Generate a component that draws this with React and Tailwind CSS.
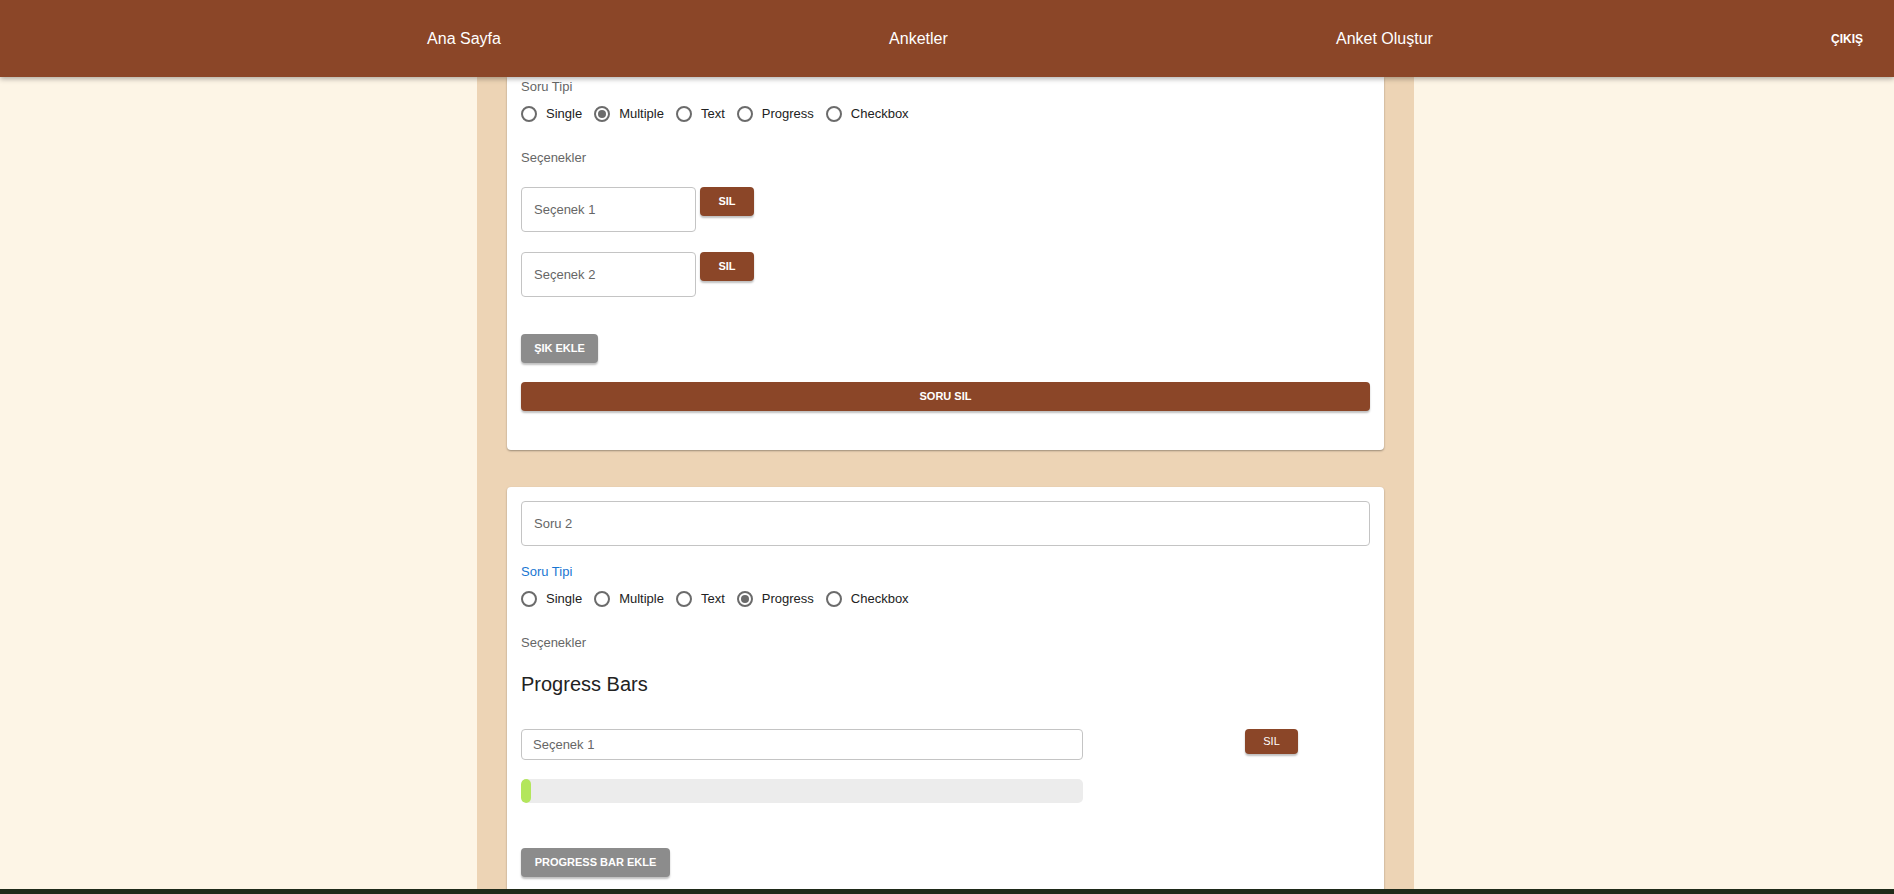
import React from 'react';

const types = ['Single', 'Multiple', 'Text', 'Progress', 'Checkbox'];

const Radio = ({ checked, label }) => (
  <label className="flex items-center mr-[12px]">
    <span className="w-[16px] h-[16px] rounded-full border-2 border-[#6b6b6b] flex items-center justify-center">
      {checked && <span className="w-[8px] h-[8px] rounded-full bg-[#6b6b6b]" />}
    </span>
    <span className="ml-[9px] text-[13px] text-[#222]">{label}</span>
  </label>
);

const TypeGroup = ({ selected, active }) => (
  <div>
    <div className={`text-[13px] leading-[16px] ${active ? 'text-[#1976d2]' : 'text-[#666]'}`}>Soru Tipi</div>
    <div className="flex items-center h-[20px] mt-[9px]">
      {types.map((t) => (
        <Radio key={t} label={t} checked={t === selected} />
      ))}
    </div>
    <div className="text-[13px] leading-[16px] text-[#666] mt-[26px]">Seçenekler</div>
  </div>
);

const BrownBtn = ({ children, className = '' }) => (
  <button className={`bg-[#8b4628] text-white text-[11px] font-bold rounded-[4px] shadow-[0_2px_2px_rgba(0,0,0,0.25)] ${className}`}>
    {children}
  </button>
);

const GrayBtn = ({ children, className = '' }) => (
  <button className={`bg-[#8c8c8c] text-white text-[11px] font-bold rounded-[4px] shadow-[0_2px_2px_rgba(0,0,0,0.25)] ${className}`}>
    {children}
  </button>
);

const OptionRow = ({ text }) => (
  <div className="flex items-start">
    <div className="w-[175px] h-[45px] border border-[#c4c4c4] rounded-[4px] px-[12px] flex items-center text-[13px] text-[#666]">
      {text}
    </div>
    <BrownBtn className="ml-[4px] w-[54px] h-[29px]">SIL</BrownBtn>
  </div>
);

export default function App() {
  return (
    <div className="min-h-[894px] h-[894px] overflow-hidden bg-[#fdf5e6] flex flex-col" style={{ fontFamily: '"Liberation Sans", Arial, sans-serif' }}>
      <header className="h-[77px] shrink-0 bg-[#8b4628] flex items-center shadow-[0_2px_5px_rgba(0,0,0,0.3)] relative z-10">
        <div className="w-[233px]" />
        <nav className="w-[1394px] flex justify-around text-white text-[16px]">
          <span>Ana Sayfa</span>
          <span>Anketler</span>
          <span>Anket Oluştur</span>
        </nav>
        <span className="ml-auto mr-[31px] text-white text-[12px] font-bold">ÇIKIŞ</span>
      </header>

      <main className="flex-1 flex justify-center">
        <div className="w-[937px] bg-[#edd4b5] px-[30px] ml-[-3px]">
          <div className="bg-white rounded-b-[4px] shadow-[0_1px_2px_rgba(0,0,0,0.35)] px-[14px] pt-[2px] pb-[39px]">
            <TypeGroup selected="Multiple" />
            <div className="mt-[21px] flex flex-col gap-[20px]">
              <OptionRow text="Seçenek 1" />
              <OptionRow text="Seçenek 2" />
            </div>
            <GrayBtn className="mt-[37px] w-[77px] h-[29px] block">ŞIK EKLE</GrayBtn>
            <BrownBtn className="mt-[19px] w-full h-[29px] block">SORU SIL</BrownBtn>
          </div>

          <div className="mt-[37px] bg-white rounded-[4px] shadow-[0_1px_2px_rgba(0,0,0,0.35)] px-[14px] pt-[14px] pb-[20px]">
            <div className="h-[45px] border border-[#c4c4c4] rounded-[4px] px-[12px] flex items-center text-[13px] text-[#666]">
              Soru 2
            </div>
            <div className="mt-[18px]">
              <TypeGroup selected="Progress" active />
            </div>
            <div className="mt-[21px] text-[20px] leading-[24px] text-[#222]">Progress Bars</div>
            <div className="mt-[33px] flex items-start">
              <div className="w-[562px]">
                <div className="h-[31px] border border-[#c4c4c4] rounded-[4px] px-[11px] flex items-center text-[13px] text-[#666]">
                  Seçenek 1
                </div>
                <div className="mt-[19px] h-[24px] bg-[#ececec] rounded-[5px] overflow-hidden">
                  <div className="h-full w-[10px] bg-[#b3e65c] rounded-full" />
                </div>
              </div>
              <BrownBtn className="ml-[162px] w-[53px] h-[25px] text-[10px] font-normal">SIL</BrownBtn>
            </div>
            <GrayBtn className="mt-[45px] w-[149px] h-[29px] block">PROGRESS BAR EKLE</GrayBtn>
          </div>
        </div>
      </main>
      <div className="h-[5px] bg-[#1f2a19] shrink-0 absolute top-[889px] left-0 right-0" />
    </div>
  );
}
